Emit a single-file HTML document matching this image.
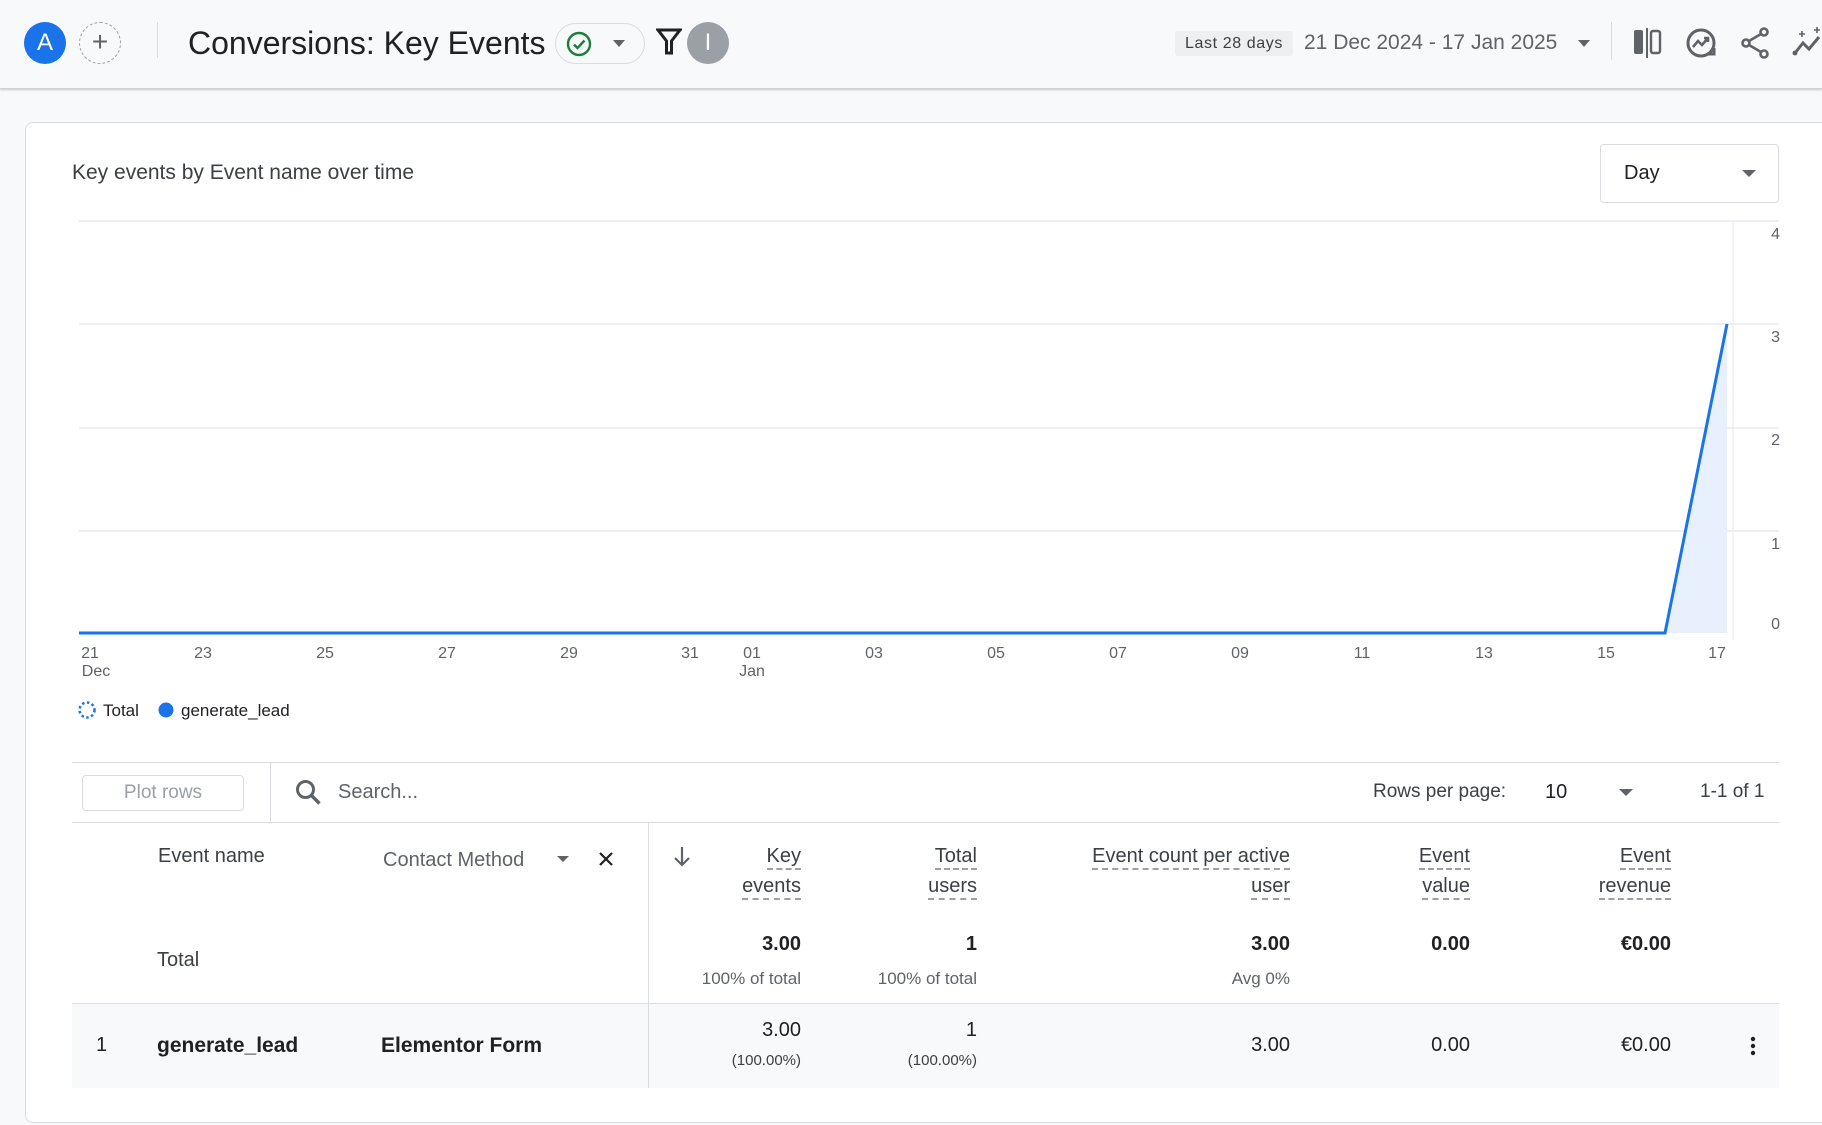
<!DOCTYPE html>
<html><head><meta charset="utf-8"><style>
*{margin:0;padding:0;box-sizing:border-box}
body{width:1822px;height:1125px;background:#f8f9fa;font-family:"Liberation Sans",Arial,sans-serif;color:#202124;position:relative;overflow:hidden}
.a{position:absolute;white-space:nowrap}
.hdr{position:absolute;left:0;top:0;width:1822px;height:89px;background:#f8f9fa;border-bottom:1px solid #d0d2d6;box-shadow:0 1px 2px rgba(60,64,67,.25)}
.card{position:absolute;left:25px;top:122px;width:1830px;height:1001px;background:#fff;border:1px solid #dadce0;border-radius:8px}
.r{text-align:right}
.dash{border-bottom:2px dashed #9aa0a6;padding-bottom:1px}
.th{font-size:20px;color:#3c4043;line-height:30px}
.v{font-size:20px;color:#202124;font-weight:600}
.s{font-size:17px;color:#5f6368}
</style></head><body>
<div class="hdr"></div>
<div class="a" style="left:24px;top:22px;width:42px;height:42px;border-radius:50%;background:#1a73e8;color:#fff;font-size:24px;text-align:center;line-height:42px">A</div>
<div class="a" style="left:79px;top:22px;width:42px;height:42px;border-radius:50%;border:1.5px dashed #9aa0a6;color:#5f6368;font-size:28px;text-align:center;line-height:38px">+</div>
<div class="a" style="left:157px;top:22px;width:1px;height:36px;background:#dadce0"></div>
<div class="a" style="left:188px;top:22px;font-size:32px;line-height:42px;color:#202124">Conversions: Key Events</div>
<div class="a" style="left:555px;top:23px;width:90px;height:41px;border:1px solid #dadce0;border-radius:21px"></div>
<svg class="a" style="left:566px;top:31px" width="26" height="26" viewBox="0 0 26 26"><circle cx="13" cy="13" r="11" fill="none" stroke="#188038" stroke-width="2.4"/><path d="M8 13.5l3.5 3.5 7-7.5" fill="none" stroke="#188038" stroke-width="2.4"/></svg>
<svg class="a" style="left:613px;top:40px" width="12" height="8"><path d="M0 0h12L6 7z" fill="#5f6368"/></svg>
<svg class="a" style="left:656px;top:28px" width="26" height="28" viewBox="0 0 26 28"><path d="M2 2h22l-8.5 11v12h-5V13z" fill="none" stroke="#202124" stroke-width="3"/></svg>
<div class="a" style="left:687px;top:22px;width:42px;height:42px;border-radius:50%;background:#9aa0a6;color:#fff;font-size:24px;text-align:center;line-height:42px">I</div>
<div class="a" style="left:1175px;top:31px;width:118px;height:25px;background:#eeeff1;border-radius:3px;font-size:16px;color:#3c4043;text-align:center;line-height:25px;letter-spacing:.6px">Last 28 days</div>
<div class="a" style="left:1304px;top:28px;font-size:21px;line-height:30px;color:#5f6368">21 Dec 2024 - 17 Jan 2025</div>
<svg class="a" style="left:1578px;top:40px" width="12" height="8"><path d="M0 0h12L6 7z" fill="#5f6368"/></svg>
<div class="a" style="left:1611px;top:22px;width:1px;height:38px;background:#dadce0"></div>
<svg class="a" style="left:1632px;top:27px" width="32" height="32" viewBox="0 0 32 32"><rect x="2" y="3" width="9" height="24" rx="2" fill="#5f6368"/><rect x="14" y="1" width="2" height="30" fill="#5f6368"/><rect x="19" y="4" width="9" height="22" rx="2" fill="none" stroke="#5f6368" stroke-width="2.4"/></svg>
<svg class="a" style="left:1684px;top:26px" width="34" height="34" viewBox="0 0 34 34"><circle cx="17" cy="17" r="13" fill="none" stroke="#5f6368" stroke-width="3"/><path d="M9 21l5-6 4 4 6-7M20 12h4v4" fill="none" stroke="#5f6368" stroke-width="2.6"/><path d="M23 28h7v-6" fill="none" stroke="#5f6368" stroke-width="3"/></svg>
<svg class="a" style="left:1740px;top:26px" width="32" height="34" viewBox="0 0 32 34"><circle cx="24" cy="6" r="3.5" fill="none" stroke="#5f6368" stroke-width="2.6"/><circle cx="6" cy="17" r="3.5" fill="none" stroke="#5f6368" stroke-width="2.6"/><circle cx="24" cy="28" r="3.5" fill="none" stroke="#5f6368" stroke-width="2.6"/><path d="M9 15l12-7M9 19l12 7" stroke="#5f6368" stroke-width="2.6"/></svg>
<svg class="a" style="left:1792px;top:26px" width="32" height="34" viewBox="0 0 32 34"><path d="M3 27l8-10 6 6 10-12" fill="none" stroke="#5f6368" stroke-width="3"/><circle cx="3" cy="27" r="2.5" fill="#5f6368"/><path d="M10 5v6M7 8h6M25 1v6M22 4h6" stroke="#5f6368" stroke-width="1.6"/></svg>

<div class="card"></div>
<div class="a" style="left:72px;top:161px;font-size:21px;color:#3c4043">Key events by Event name over time</div>
<div class="a" style="left:1600px;top:144px;width:179px;height:59px;border:1px solid #dadce0;border-radius:4px"></div>
<div class="a" style="left:1624px;top:162px;font-size:20px;color:#202124">Day</div>
<svg class="a" style="left:1742px;top:170px" width="14" height="8"><path d="M0 0h14L7 7z" fill="#5f6368"/></svg>

<svg class="a" style="left:0;top:0" width="1822" height="760">
<g stroke="#e8eaed" stroke-width="1.5"><line x1="79" y1="221" x2="1779" y2="221"/><line x1="79" y1="324" x2="1779" y2="324"/><line x1="79" y1="428" x2="1779" y2="428"/><line x1="79" y1="531" x2="1779" y2="531"/></g>
<line x1="1733" y1="221" x2="1733" y2="640" stroke="#e8eaed" stroke-width="1"/>
<path d="M1665 633L1727 324V633z" fill="#e8f0fe"/>
<path d="M79 633H1665L1727 324" fill="none" stroke="#1a73e8" stroke-width="3"/>
<g font-family="Liberation Sans,Arial" font-size="16" fill="#5f6368" text-anchor="end"><text x="1780" y="239">4</text><text x="1780" y="342">3</text><text x="1780" y="445">2</text><text x="1780" y="549">1</text><text x="1780" y="629">0</text></g>
<g font-family="Liberation Sans,Arial" font-size="16" fill="#5f6368" text-anchor="middle">
<text x="90" y="658">21</text><text x="96" y="676">Dec</text><text x="203" y="658">23</text><text x="325" y="658">25</text><text x="447" y="658">27</text><text x="569" y="658">29</text><text x="690" y="658">31</text><text x="752" y="658">01</text><text x="752" y="676">Jan</text><text x="874" y="658">03</text><text x="996" y="658">05</text><text x="1118" y="658">07</text><text x="1240" y="658">09</text><text x="1362" y="658">11</text><text x="1484" y="658">13</text><text x="1606" y="658">15</text><text x="1717" y="658">17</text></g>
<circle cx="87" cy="710" r="7.5" fill="none" stroke="#1a73e8" stroke-width="2.5" stroke-dasharray="2.5 2.5"/>
<circle cx="166" cy="710" r="7.5" fill="#1a73e8"/>
<g font-family="Liberation Sans,Arial" font-size="17" fill="#202124"><text x="103" y="716">Total</text><text x="181" y="716">generate_lead</text></g>
</svg>

<div class="a" style="left:72px;top:762px;width:1707px;height:1px;background:#dadce0"></div>
<div class="a" style="left:82px;top:775px;width:162px;height:36px;border:1px solid #dadce0;border-radius:4px;font-size:19px;color:#9aa0a6;text-align:center;line-height:34px">Plot rows</div>
<div class="a" style="left:270px;top:762px;width:1px;height:60px;background:#dadce0"></div>
<svg class="a" style="left:294px;top:778px" width="30" height="30" viewBox="0 0 30 30"><circle cx="11.5" cy="11.5" r="8" fill="none" stroke="#5f6368" stroke-width="3"/><path d="M17.5 17.5l8 8" stroke="#5f6368" stroke-width="3.4"/></svg>
<div class="a" style="left:338px;top:781px;font-size:20px;color:#5f6368">Search...</div>
<div class="a" style="left:1373px;top:781px;font-size:19px;color:#3c4043">Rows per page:</div>
<div class="a" style="left:1545px;top:781px;font-size:20px;color:#202124">10</div>
<svg class="a" style="left:1619px;top:789px" width="14" height="8"><path d="M0 0h14L7 7z" fill="#5f6368"/></svg>
<div class="a" style="left:1700px;top:781px;font-size:19px;color:#3c4043">1-1 of 1</div>
<div class="a" style="left:72px;top:822px;width:1707px;height:1px;background:#dadce0"></div>

<div class="a th" style="left:158px;top:841px">Event name</div>
<div class="a th" style="left:383px;top:845px;color:#5f6368">Contact Method</div>
<svg class="a" style="left:557px;top:856px" width="12" height="7"><path d="M0 0h12L6 6z" fill="#5f6368"/></svg>
<svg class="a" style="left:598px;top:851px" width="16" height="16"><path d="M2 2l12 12M14 2L2 14" stroke="#202124" stroke-width="2.2"/></svg>
<div class="a" style="left:648px;top:822px;width:1px;height:266px;background:#dadce0"></div>
<svg class="a" style="left:672px;top:846px" width="20" height="22"><path d="M10 1v18M3 12l7 7 7-7" fill="none" stroke="#5f6368" stroke-width="2.2"/></svg>

<div class="a th r" style="right:1021px;top:841px"><span class="dash">Key</span></div>
<div class="a th r" style="right:1021px;top:871px"><span class="dash">events</span></div>
<div class="a th r" style="right:845px;top:841px"><span class="dash">Total</span></div>
<div class="a th r" style="right:845px;top:871px"><span class="dash">users</span></div>
<div class="a th r" style="right:532px;top:841px"><span class="dash">Event count per active</span></div>
<div class="a th r" style="right:532px;top:871px"><span class="dash">user</span></div>
<div class="a th r" style="right:352px;top:841px"><span class="dash">Event</span></div>
<div class="a th r" style="right:352px;top:871px"><span class="dash">value</span></div>
<div class="a th r" style="right:151px;top:841px"><span class="dash">Event</span></div>
<div class="a th r" style="right:151px;top:871px"><span class="dash">revenue</span></div>

<div class="a" style="left:157px;top:949px;font-size:20px;color:#3c4043">Total</div>
<div class="a v r" style="right:1021px;top:933px">3.00</div>
<div class="a s r" style="right:1021px;top:969px">100% of total</div>
<div class="a v r" style="right:845px;top:933px">1</div>
<div class="a s r" style="right:845px;top:969px">100% of total</div>
<div class="a v r" style="right:532px;top:933px">3.00</div>
<div class="a s r" style="right:532px;top:969px">Avg 0%</div>
<div class="a v r" style="right:352px;top:933px">0.00</div>
<div class="a v r" style="right:151px;top:933px">€0.00</div>

<div class="a" style="left:72px;top:1003px;width:1707px;height:1px;background:#dadce0"></div>
<div class="a" style="left:72px;top:1004px;width:1707px;height:84px;background:#f8f9fa"></div>
<div class="a" style="left:648px;top:1004px;width:1px;height:84px;background:#dadce0"></div>
<div class="a" style="left:96px;top:1034px;font-size:20px">1</div>
<div class="a" style="left:157px;top:1034px;font-size:21px;font-weight:600">generate_lead</div>
<div class="a" style="left:381px;top:1034px;font-size:21px;font-weight:600">Elementor Form</div>
<div class="a r" style="right:1021px;top:1019px;font-size:20px">3.00</div>
<div class="a r" style="right:1021px;top:1052px;font-size:15px;color:#3c4043">(100.00%)</div>
<div class="a r" style="right:845px;top:1019px;font-size:20px">1</div>
<div class="a r" style="right:845px;top:1052px;font-size:15px;color:#3c4043">(100.00%)</div>
<div class="a r" style="right:532px;top:1034px;font-size:20px">3.00</div>
<div class="a r" style="right:352px;top:1034px;font-size:20px">0.00</div>
<div class="a r" style="right:151px;top:1034px;font-size:20px">€0.00</div>
<svg class="a" style="left:1750px;top:1036px" width="6" height="20"><circle cx="3" cy="3" r="2.2" fill="#202124"/><circle cx="3" cy="10" r="2.2" fill="#202124"/><circle cx="3" cy="17" r="2.2" fill="#202124"/></svg>
</body></html>
